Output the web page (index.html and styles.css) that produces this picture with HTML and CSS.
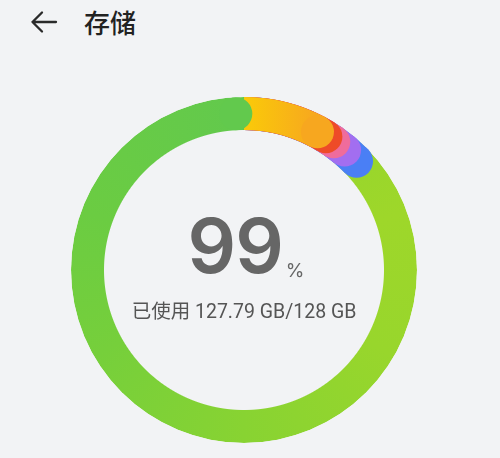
FILE: index.html
```html
<!DOCTYPE html>
<html lang="zh">
<head>
<meta charset="utf-8">
<link rel="stylesheet" href="styles.css">
</head>
<body>
<header class="topbar">
  <svg class="back" width="28" height="24" viewBox="0 0 28 24" fill="none" stroke="#2a2a2a" stroke-width="2.3" stroke-linecap="round" stroke-linejoin="round">
    <path d="M26 12H2.5M12 2.5L2.5 12L12 21.5"/>
  </svg>
  <h1 class="title">存储</h1>
</header>
<main class="content">
  <div class="gauge">
    <div class="ring"></div>
    <svg class="segments" width="346" height="346" viewBox="0 0 346 346">
      <defs>
        <linearGradient id="yo" gradientUnits="userSpaceOnUse" x1="178" y1="0" x2="246.5" y2="0">
          <stop offset="0" stop-color="#fac80a"/>
          <stop offset="1" stop-color="#f7a71f"/>
        </linearGradient>
      </defs>
      <g fill="none" stroke-width="33" stroke-linecap="butt">
        <path stroke="#4a7ff5" d="M173 16.5A156.5 156.5 0 0 1 285.58 64.29"/>
        <circle cx="285.58" cy="64.29" r="16.5" fill="#4a7ff5" stroke="none"/>
        <path stroke="#a26ef0" d="M173 16.5A156.5 156.5 0 0 1 273.6 53.12"/>
        <circle cx="273.6" cy="53.12" r="16.5" fill="#a26ef0" stroke="none"/>
        <path stroke="#ef6c9c" d="M173 16.5A156.5 156.5 0 0 1 262.77 44.8"/>
        <circle cx="262.77" cy="44.8" r="16.5" fill="#ef6c9c" stroke="none"/>
        <path stroke="#ee4b28" d="M173 16.5A156.5 156.5 0 0 1 254.9 39.65"/>
        <circle cx="254.9" cy="39.65" r="16.5" fill="#ee4b28" stroke="none"/>
        <path stroke="url(#yo)" d="M173 16.5A156.5 156.5 0 0 1 246.47 34.82"/>
        <circle cx="246.47" cy="34.82" r="16.5" fill="#f7a71f" stroke="none"/>
        <circle cx="164.81" cy="16.71" r="16.5" fill="#62c94d" stroke="none"/>
      </g>
    </svg>
    <div class="readout">
      <div class="percent"><span class="num">99</span><span class="sign">%</span></div>
      <div class="used">已使用 127.79 GB/128 GB</div>
    </div>
  </div>
</main>
</body>
</html>
```
FILE: styles.css
```css
html, body {
  margin: 0;
  padding: 0;
}
body {
  width: 500px;
  height: 458px;
  overflow: hidden;
  background: #f2f3f5;
  font-family: "Roboto", "Noto Sans CJK SC", sans-serif;
  color: #333;
}
.topbar {
  display: flex;
  align-items: center;
  height: 44px;
  padding-left: 30px;
  gap: 26px;
}
.back {
  display: block;
  flex: none;
}
.title {
  margin: 0;
  font-family: "Noto Sans CJK SC", sans-serif;
  font-size: 26px;
  font-weight: 500;
  color: #222;
  line-height: 1;
}
.content {
  padding-top: 53px;
  padding-left: 71px;
}
.gauge {
  display: grid;
  width: 346px;
  height: 346px;
  filter: blur(0.5px);
}
.gauge > * {
  grid-area: 1 / 1;
}
.ring {
  position: relative;
  z-index: 0;
  width: 346px;
  height: 346px;
  border-radius: 50%;
  background: conic-gradient(from 0deg,
    #8fd42e 0deg,
    #9ed72a 70deg,
    #98d62c 120deg,
    #88d332 180deg,
    #76cf3b 240deg,
    #6bcc42 290deg,
    #62c94d 360deg);
  -webkit-mask: radial-gradient(circle closest-side, transparent calc(100% - 33.5px), #000 calc(100% - 32.5px));
  mask: radial-gradient(circle closest-side, transparent calc(100% - 33.5px), #000 calc(100% - 32.5px));
}
.segments {
  display: block;
  position: relative;
  z-index: 1;
}
.readout {
  position: relative;
  z-index: 2;
  display: flex;
  flex-direction: column;
  align-items: center;
  padding-top: 110px;
}
.percent {
  display: flex;
  align-items: baseline;
  gap: 3px;
  padding-left: 4px;
}
.num {
  font-family: "Inter", "Roboto", sans-serif;
  font-size: 76px;
  font-weight: 600;
  color: #666;
  letter-spacing: -1px;
  line-height: 1;
}
.sign {
  font-family: "Inter", "Roboto", sans-serif;
  font-size: 19px;
  color: #666;
  position: relative;
  top: 4px;
}
.used {
  margin-top: 19px;
  font-size: 19.5px;
  color: #555;
  line-height: 1;
}
```
